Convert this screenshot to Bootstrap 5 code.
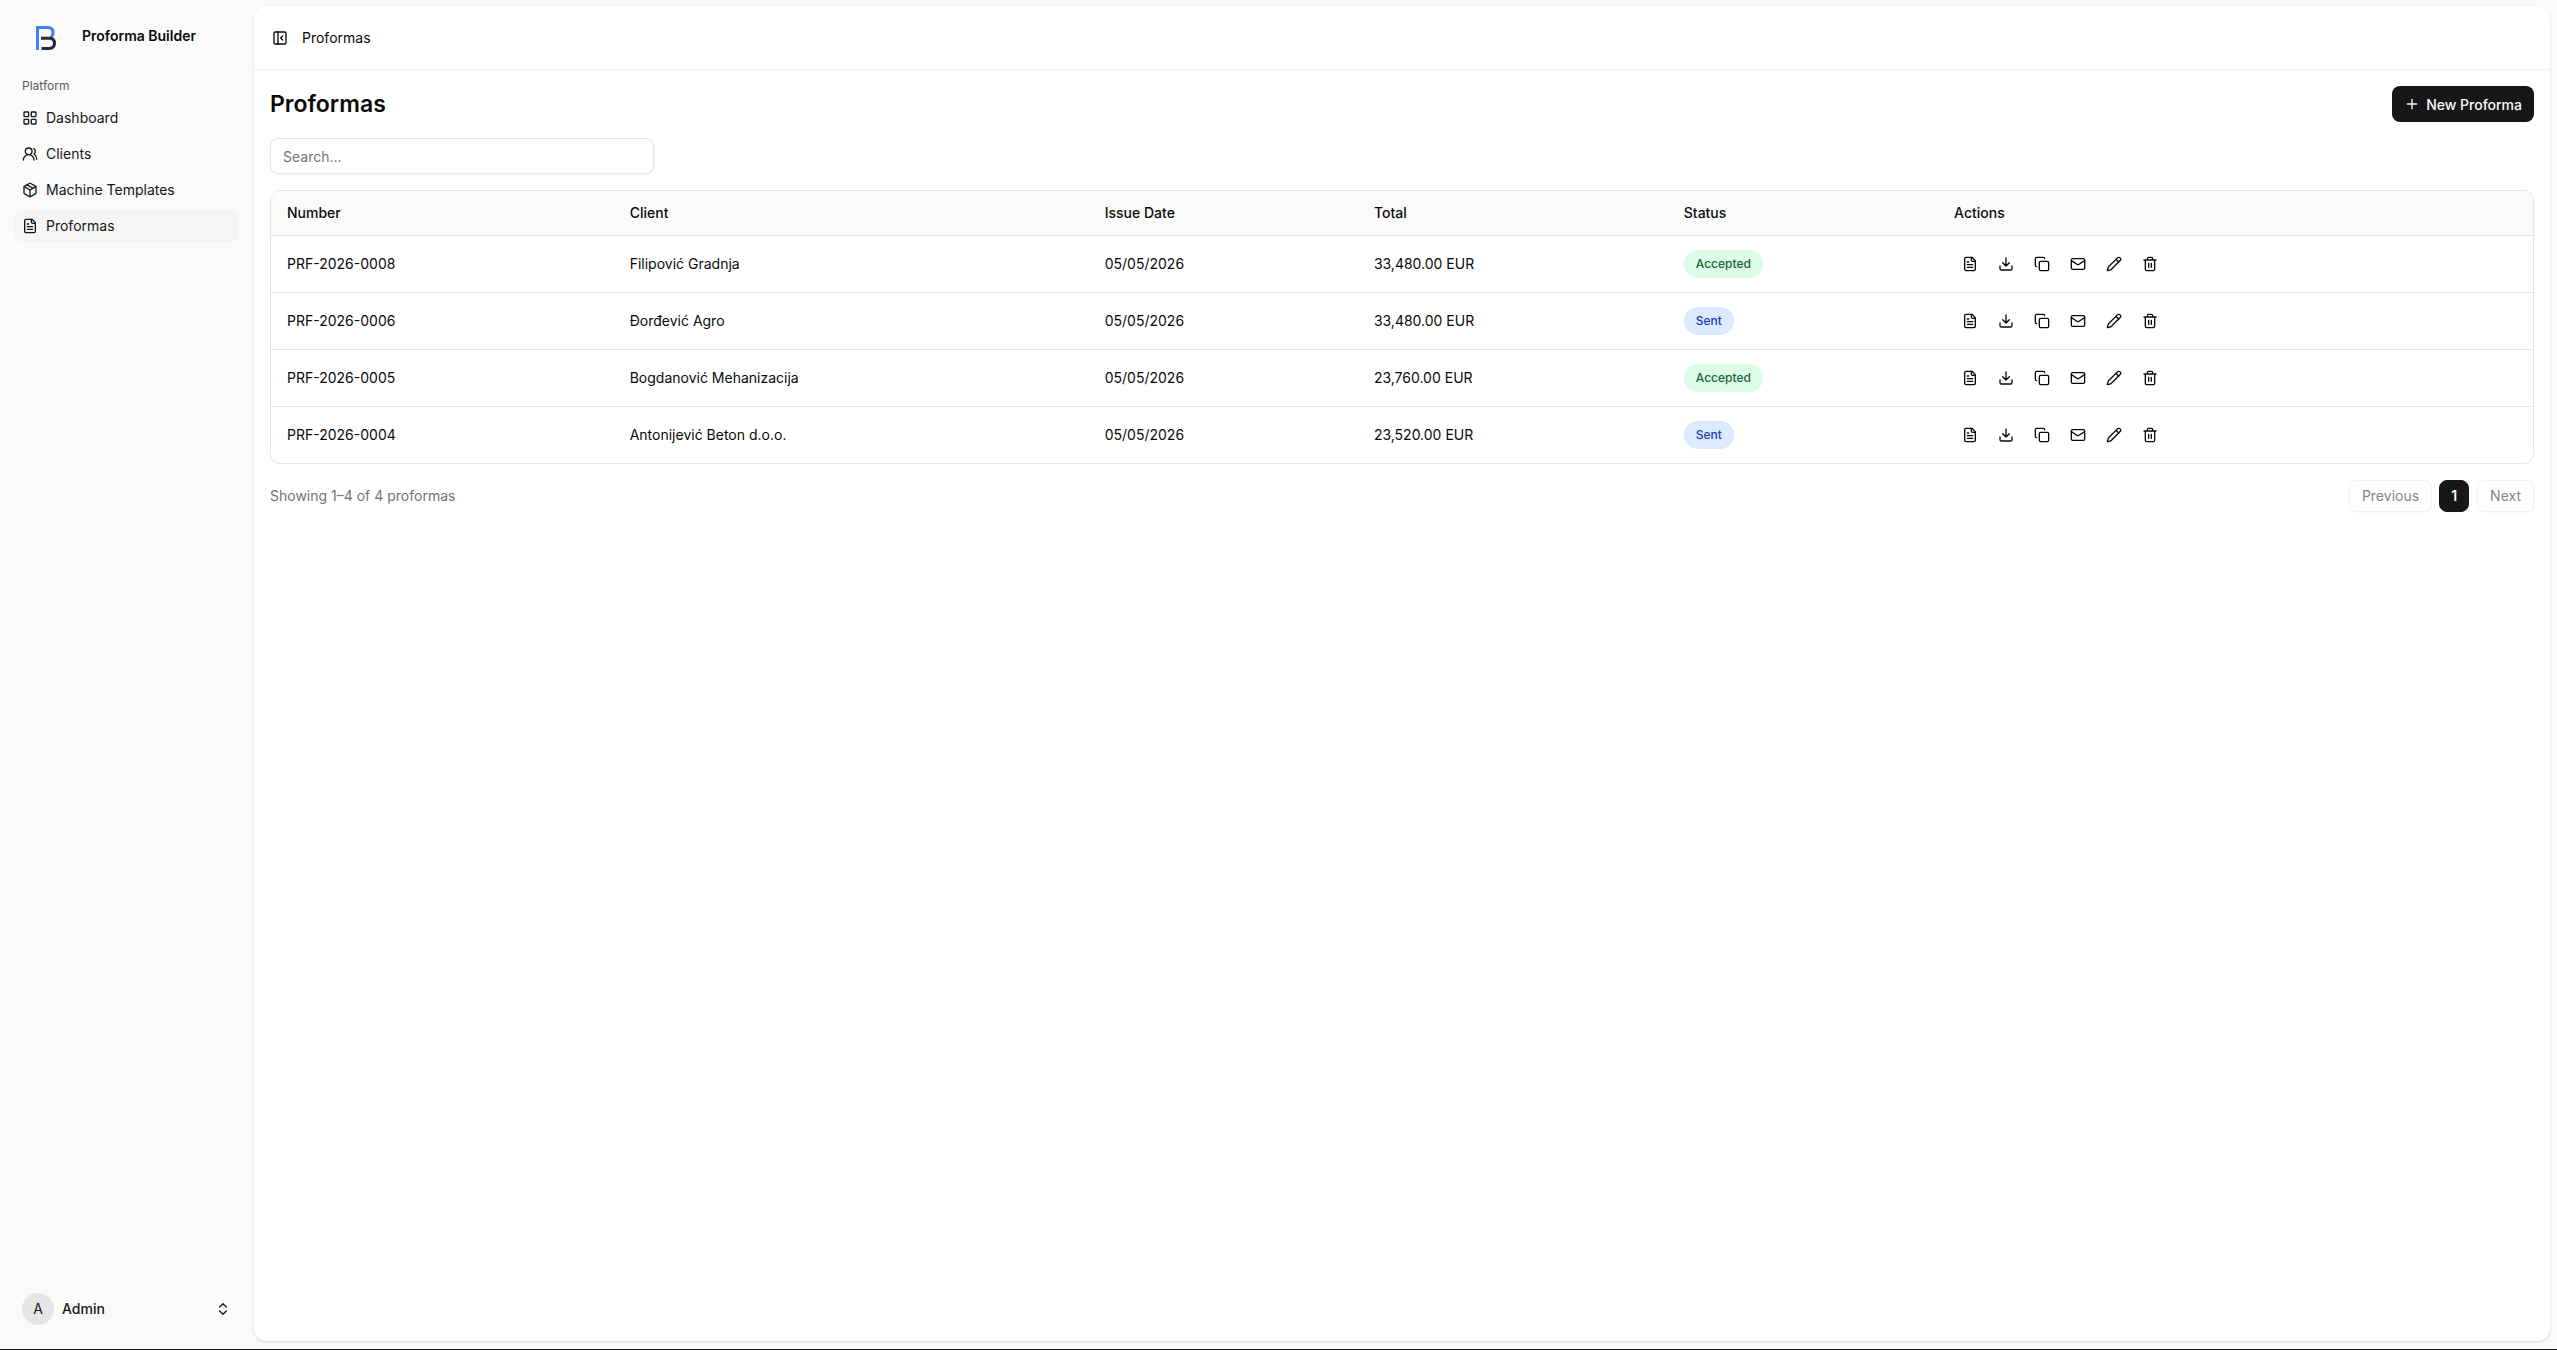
<!DOCTYPE html>
<html lang="en">
<head>
<meta charset="utf-8">
<meta name="viewport" content="width=device-width, initial-scale=1">
<title>Proformas - Proforma Builder</title>
<link href="https://cdn.jsdelivr.net/npm/bootstrap@5.3.0/dist/css/bootstrap.min.css" rel="stylesheet">
<style>
  body { font-family: Inter, "Noto Sans", sans-serif; font-size: 14px; line-height: 20px; color: #0a0a0a; background: #fafafa; }
  .shell { border-bottom: 1px solid #18181b; }
  .ico { width: 16px; height: 16px; flex: none; fill: none; stroke: currentColor; stroke-width: 2; stroke-linecap: round; stroke-linejoin: round; display: block; }
  .side { width: 254px; flex: none; padding: 14px 15px 16px 14px; }
  .brand { height: 48px; gap: 26px; padding: 0 8px 0 22px; color: #0a0a0a; }
  .brand svg { width: 20px; height: 24px; fill: none; stroke-width: 3; stroke-linejoin: miter; stroke-linecap: butt; }
  .side-label { font-size: 12px; height: 32px; margin-top: 8px; padding: 0 8px; color: #5c5c5c; }
  .side .nav { gap: 4px; }
  .side .nav-link { height: 32px; padding: 0 8px; gap: 8px; color: #171717; border-radius: 8px; }
  .side .nav-link.active { background: #f5f5f5; }
  .account { height: 48px; padding: 0 8px; gap: 8px; color: #171717; background: none; border: 0; }
  .avatar { width: 32px; height: 32px; background: #e5e5e5; }
  .panel { margin: 6px 7px 8px 0; background: #fff; border-radius: 12px; box-shadow: 0 1px 3px rgba(0,0,0,.1), 0 1px 2px rgba(0,0,0,.06); min-width: 0; }
  .topbar { height: 64px; border-bottom: 1px solid #f0f0f0; padding: 0 12px; gap: 8px; }
  .btn-icon { width: 28px; height: 28px; padding: 0; border: 0; display: inline-flex; align-items: center; justify-content: center; color: #0a0a0a; }
  .actions .btn-icon { width: 32px; height: 32px; }
  .page-title { font-size: 23px; line-height: 32px; font-weight: 600; }
  .btn-new { height: 36px; padding: 0 12px; gap: 6px; font-size: 14px; font-weight: 500; background: #171717; color: #fafafa; border: 0; border-radius: 8px; }
  .search { max-width: 384px; height: 36px; padding: 4px 12px; font-size: 14px; border-color: #e5e5e5; border-radius: 8px; box-shadow: 0 1px 2px rgba(0,0,0,.05); }
  .search::placeholder { color: #737373; }
  .grid-box { border: 1px solid #e5e5e5; border-radius: 10px; overflow: hidden; }
  .grid-box .table { --bs-table-color: #0a0a0a; --bs-table-bg: transparent; border-color: #e5e5e5; table-layout: fixed; border-collapse: separate; border-spacing: 0; }
  .grid-box th { height: 45px; padding: 0 16px; font-weight: 500; background: #fafafa; vertical-align: middle; }
  .grid-box td { height: 57px; padding: 0 16px; vertical-align: middle; }
  .grid-box tbody tr:last-child td { border-bottom: 0; height: 56px; }
  .pill { display: inline-block; padding: 4px 12px; font-size: 12px; font-weight: 500; border-radius: 14px; vertical-align: middle; }
  .pill-accepted { background: #dcfce7; color: #166534; }
  .pill-sent { background: #dbeafe; color: #1e40af; }
  .count { color: #737373; }
  .pager .page-link { height: 32px; padding: 5px 12px; font-size: 14px; line-height: 20px; border: 1px solid #f2f2f2; border-radius: 8px; color: #858585; background: #fff; box-shadow: 0 1px 2px rgba(0,0,0,.03); }
  .pager .active .page-link { width: 30px; padding: 5px 0; text-align: center; font-weight: 600; color: #fff; background: #171717; border-color: #171717; }
</style>
<script src="https://cdn.jsdelivr.net/npm/bootstrap@5.3.0/dist/js/bootstrap.bundle.min.js"></script>
</head>
<body>
<svg class="d-none" aria-hidden="true">
  <symbol id="i-file" viewBox="0 0 24 24"><path d="M15 2H6a2 2 0 0 0-2 2v16a2 2 0 0 0 2 2h12a2 2 0 0 0 2-2V7Z"/><path d="M14 2v4a2 2 0 0 0 2 2h4"/><path d="M10 9H8M16 13H8M16 17H8"/></symbol>
  <symbol id="i-download" viewBox="0 0 24 24"><path d="M21 15v4a2 2 0 0 1-2 2H5a2 2 0 0 1-2-2v-4"/><path d="m7 10 5 5 5-5M12 15V3"/></symbol>
  <symbol id="i-copy" viewBox="0 0 24 24"><rect width="14" height="14" x="8" y="8" rx="2"/><path d="M4 16c-1.1 0-2-.9-2-2V4c0-1.100.9-2 2-2h10c1.100 0 2 .9 2 2"/></symbol>
  <symbol id="i-mail" viewBox="0 0 24 24"><rect width="20" height="16" x="2" y="4" rx="2"/><path d="m22 7-8.970 5.700a1.940 1.940 0 0 1-2.060 0L2 7"/></symbol>
  <symbol id="i-pencil" viewBox="0 0 24 24"><path d="M21.174 6.812a1 1 0 0 0-3.986-3.987L3.842 16.174a2 2 0 0 0-.5.830l-1.321 4.352a.5.5 0 0 0 .623.622l4.353-1.320a2 2 0 0 0 .830-.497z"/><path d="m15 5 4 4"/></symbol>
  <symbol id="i-trash" viewBox="0 0 24 24"><path d="M3 6h18M19 6v14c0 1-1 2-2 2H7c-1 0-2-1-2-2V6M8 6V4c0-1 1-2 2-2h4c1 0 2 1 2 2v2M10 11v6M14 11v6"/></symbol>
  <symbol id="i-grid" viewBox="0 0 24 24"><rect width="7" height="7" x="3" y="3" rx="1"/><rect width="7" height="7" x="14" y="3" rx="1"/><rect width="7" height="7" x="14" y="14" rx="1"/><rect width="7" height="7" x="3" y="14" rx="1"/></symbol>
  <symbol id="i-users" viewBox="0 0 24 24"><path d="M18 21a8 8 0 0 0-16 0"/><circle cx="10" cy="8" r="5"/><path d="M22 20c0-3.370-2-6.500-4-8a5 5 0 0 0-.450-8.300"/></symbol>
  <symbol id="i-package" viewBox="0 0 24 24"><path d="M11 21.730a2 2 0 0 0 2 0l7-4A2 2 0 0 0 21 16V8a2 2 0 0 0-1-1.730l-7-4a2 2 0 0 0-2 0l-7 4A2 2 0 0 0 3 8v8a2 2 0 0 0 1 1.730z"/><path d="M12 22V12M3.300 7 12 12l8.700-5M7.500 4.270l9 5.150"/></symbol>
  <symbol id="i-panel" viewBox="0 0 24 24"><rect width="18" height="18" x="3" y="3" rx="2"/><path d="M9 3v18M16 15l-3-3 3-3"/></symbol>
  <symbol id="i-plus" viewBox="0 0 24 24"><path d="M5 12h14M12 5v14"/></symbol>
  <symbol id="i-updown" viewBox="0 0 24 24"><path d="m7 15 5 5 5-5M7 9l5-5 5 5"/></symbol>
</svg>

<div class="shell d-flex min-vh-100">
  <aside class="side d-flex flex-column">
    <a href="#" class="brand d-flex align-items-center text-decoration-none">
      <svg viewBox="0 0 20 24" aria-hidden="true"><path stroke="#3b82f6" d="M1.500 24V1.500H12Q17 1.500 17 6.500Q17 10 14.500 12"/><path stroke="#252a41" d="M5 12.200H13.500Q18.500 12.500 18.500 17.300Q18.500 22.500 13 22.500H5.500"/></svg>
      <span class="fw-semibold text-nowrap pb-1">Proforma Builder</span>
    </a>
    <div class="side-label d-flex align-items-center">Platform</div>
    <nav class="nav flex-column" aria-label="Platform">
      <a class="nav-link d-flex align-items-center" href="#"><svg class="ico"><use href="#i-grid"/></svg>Dashboard</a>
      <a class="nav-link d-flex align-items-center" href="#"><svg class="ico"><use href="#i-users"/></svg>Clients</a>
      <a class="nav-link d-flex align-items-center" href="#"><svg class="ico"><use href="#i-package"/></svg>Machine Templates</a>
      <a class="nav-link active d-flex align-items-center" href="#" aria-current="page"><svg class="ico"><use href="#i-file"/></svg>Proformas</a>
    </nav>
    <button type="button" class="account d-flex align-items-center w-100 mt-auto">
      <span class="avatar rounded-circle d-flex align-items-center justify-content-center">A</span>
      <span class="fw-medium">Admin</span>
      <svg class="ico ms-auto"><use href="#i-updown"/></svg>
    </button>
  </aside>

  <main class="panel flex-grow-1">
    <header class="topbar d-flex align-items-center">
      <button type="button" class="btn btn-icon" aria-label="Toggle sidebar"><svg class="ico"><use href="#i-panel"/></svg></button>
      <span>Proformas</span>
    </header>
    <div class="d-flex flex-column gap-3 p-3">
      <div class="d-flex align-items-center justify-content-between">
        <h1 class="page-title m-0">Proformas</h1>
        <button type="button" class="btn btn-new d-flex align-items-center"><svg class="ico"><use href="#i-plus"/></svg>New Proforma</button>
      </div>
      <input type="search" class="form-control search" placeholder="Search..." aria-label="Search proformas">
      <div class="grid-box">
        <table class="table mb-0">
          <colgroup><col style="width:15.15%"><col style="width:21%"><col style="width:11.9%"><col style="width:13.7%"><col style="width:11.95%"><col></colgroup>
          <thead><tr><th scope="col">Number</th><th scope="col">Client</th><th scope="col">Issue Date</th><th scope="col">Total</th><th scope="col">Status</th><th scope="col">Actions</th></tr></thead>
          <tbody id="rows"></tbody>
        </table>
      </div>
      <div class="d-flex align-items-center justify-content-between">
        <span class="count">Showing 1–4 of 4 proformas</span>
        <nav aria-label="Pages">
          <ul class="pager pagination gap-2 m-0">
            <li class="page-item"><a class="page-link" href="#">Previous</a></li>
            <li class="page-item active"><a class="page-link" href="#" aria-current="page">1</a></li>
            <li class="page-item"><a class="page-link m-0" href="#">Next</a></li>
          </ul>
        </nav>
      </div>
    </div>
  </main>
</div>
<script>
  const proformas = [
    ["PRF-2026-0008", "Filipović Gradnja", "33,480.00 EUR", "Accepted"],
    ["PRF-2026-0006", "Đorđević Agro", "33,480.00 EUR", "Sent"],
    ["PRF-2026-0005", "Bogdanović Mehanizacija", "23,760.00 EUR", "Accepted"],
    ["PRF-2026-0004", "Antonijević Beton d.o.o.", "23,520.00 EUR", "Sent"]
  ];
  const actions = [["file", "View"], ["download", "Download"], ["copy", "Duplicate"], ["mail", "Email"], ["pencil", "Edit"], ["trash", "Delete"]];
  document.getElementById("rows").innerHTML = proformas.map(([number, client, total, status]) => `
    <tr><td>${number}</td><td>${client}</td><td>05/05/2026</td><td>${total}</td>
    <td><span class="pill pill-${status.toLowerCase()}">${status}</span></td>
    <td><div class="actions d-flex gap-1">${actions.map(([icon, label]) =>
      `<button type="button" class="btn btn-icon" aria-label="${label} ${number}"><svg class="ico"><use href="#i-${icon}"/></svg></button>`).join("")}</div></td></tr>`).join("");
</script>
</body>
</html>
